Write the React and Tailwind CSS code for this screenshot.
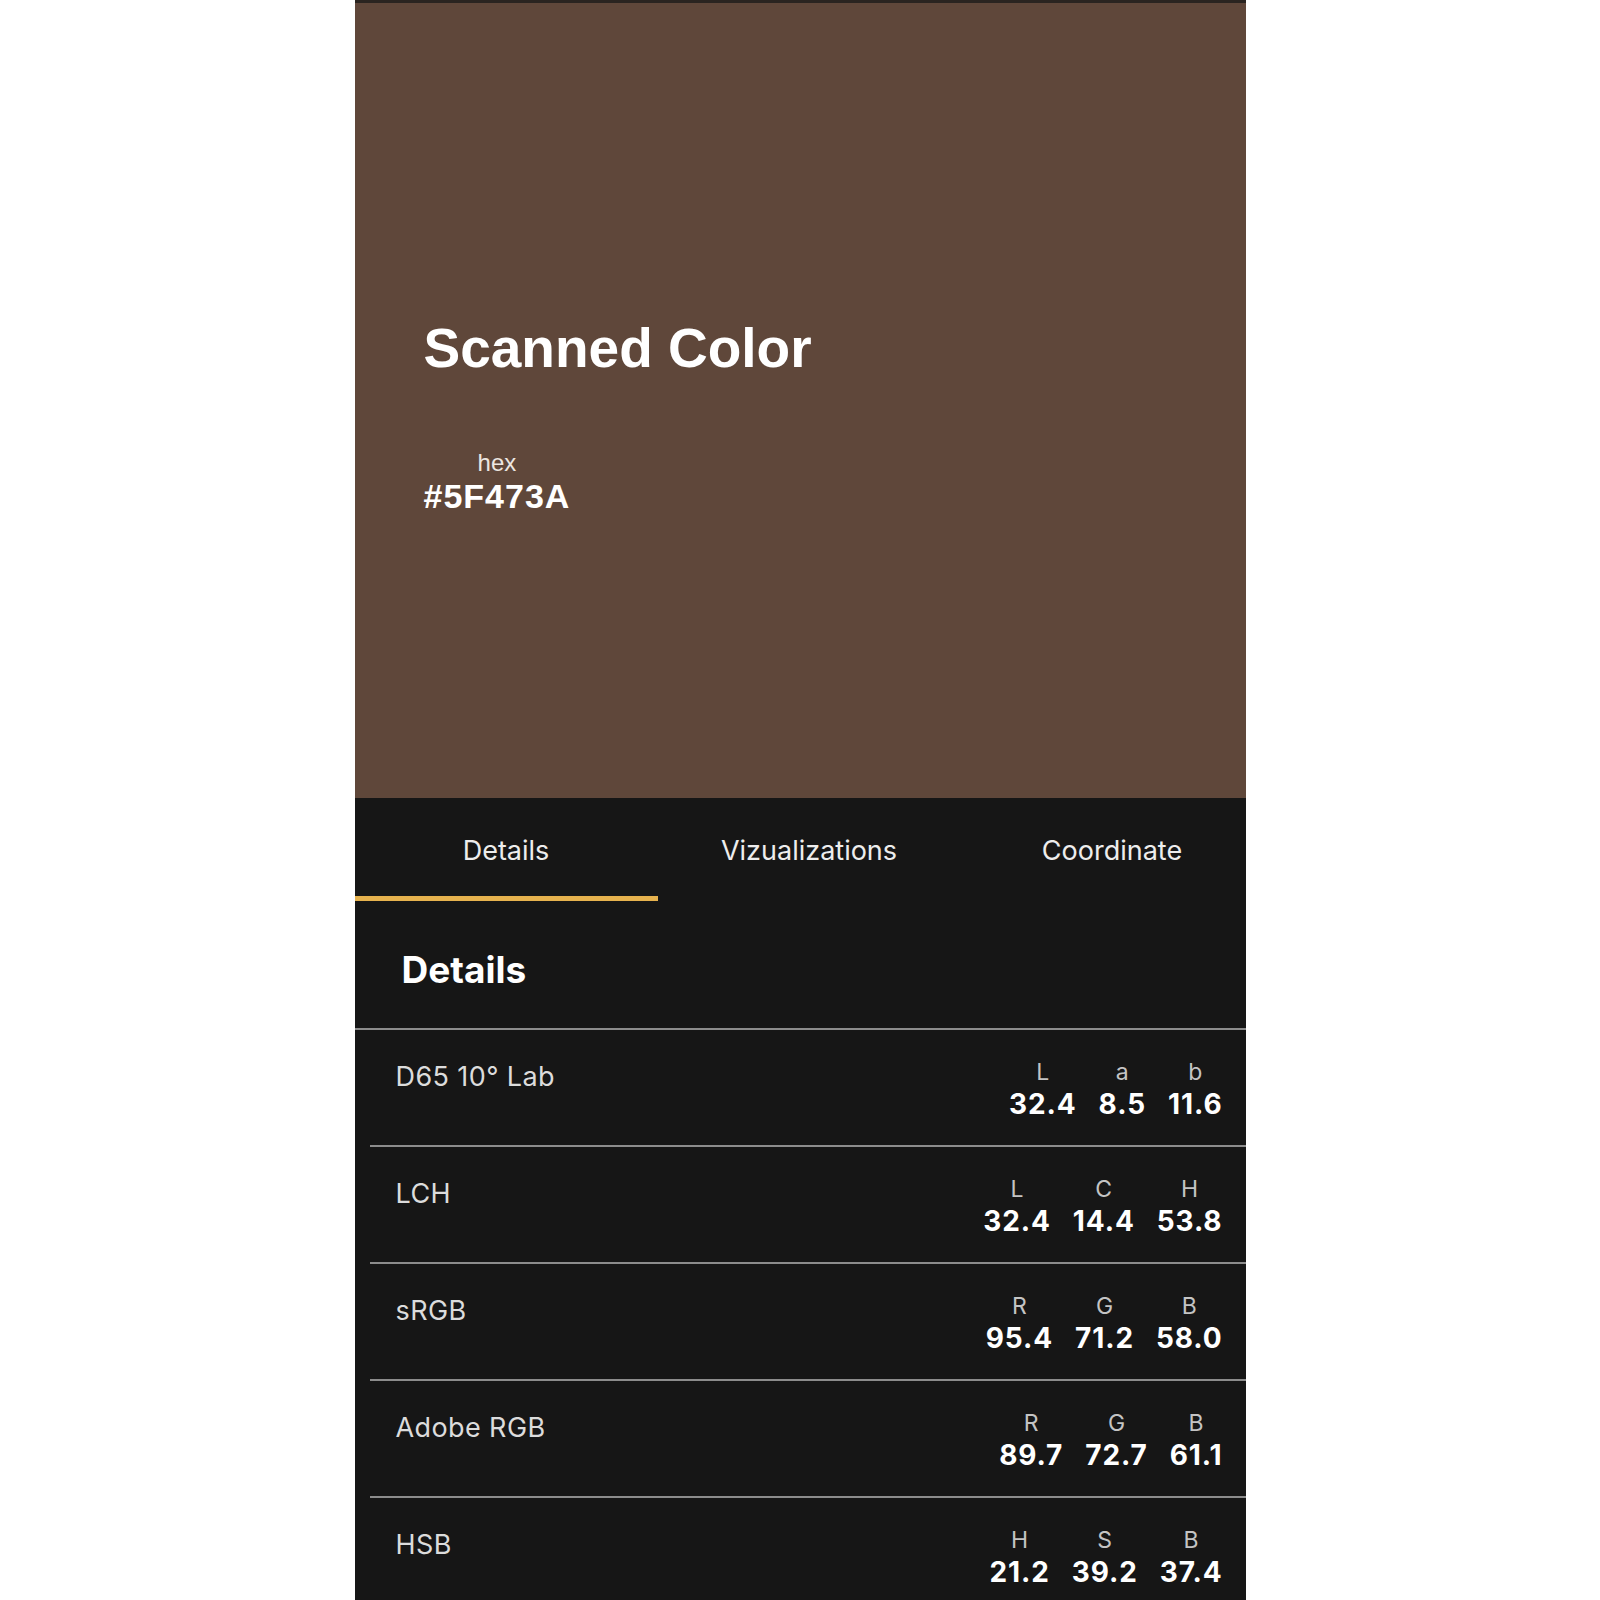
import React, { useState } from "react";

const rows = [
  {
    name: "D65 10° Lab",
    values: [
      ["L", "32.4"],
      ["a", "8.5"],
      ["b", "11.6"],
    ],
  },
  {
    name: "LCH",
    values: [
      ["L", "32.4"],
      ["C", "14.4"],
      ["H", "53.8"],
    ],
  },
  {
    name: "sRGB",
    values: [
      ["R", "95.4"],
      ["G", "71.2"],
      ["B", "58.0"],
    ],
  },
  {
    name: "Adobe RGB",
    values: [
      ["R", "89.7"],
      ["G", "72.7"],
      ["B", "61.1"],
    ],
  },
  {
    name: "HSB",
    values: [
      ["H", "21.2"],
      ["S", "39.2"],
      ["B", "37.4"],
    ],
  },
];

const tabs = ["Details", "Vizualizations", "Coordinate"];

export default function App() {
  const [activeTab, setActiveTab] = useState(0);

  return (
    <div className="bg-white min-h-screen">
      <div className="w-[891px] mx-auto min-h-screen bg-[#161616] overflow-hidden">
        {/* Color swatch */}
        <div className="h-[3px] bg-[#2a2420]" />
        <section className="h-[795px] bg-[#5f473a] pl-[69px] pt-[318px] font-['Liberation_Sans',Arial,sans-serif] text-white">
          <h1 className="text-[55px] leading-none font-bold">Scanned Color</h1>
          <div className="mt-[75px] inline-flex flex-col items-center">
            <span className="text-[24px] leading-none text-[#ece6e1]">hex</span>
            <span className="mt-[4px] text-[34px] leading-none font-bold tracking-[1px]">
              #5F473A
            </span>
          </div>
        </section>

        {/* Tabs */}
        <div className="flex font-['Inter',sans-serif]">
          {tabs.map((tab, index) => (
            <button
              key={tab}
              onClick={() => setActiveTab(index)}
              className={`w-[303px] shrink-0 h-[103px] pt-[39px] flex justify-center text-[27px] leading-none text-[#ededed] border-b-[5px] ${
                activeTab === index ? "border-[#e6b24e]" : "border-transparent"
              }`}
            >
              {tab}
            </button>
          ))}
        </div>

        {/* Details */}
        <div className="font-['Inter',sans-serif]">
          <h2 className="pl-[47px] pt-[50px] pb-[40px] text-[37px] leading-none font-bold text-white">
            Details
          </h2>
          <div className="h-[2px] bg-[#8c8c8c]" />
          {rows.map((row) => (
            <div key={row.name}>
              <div className="h-[115px] flex justify-between pl-[41px] pr-[23px]">
                <div className="pt-[33px] text-[27px] leading-none tracking-[0.4px] text-[#dcdcdc]">
                  {row.name}
                </div>
                <div className="pt-[31px] flex gap-[22px]">
                  {row.values.map(([label, value]) => (
                    <div key={label} className="flex flex-col items-center">
                      <span className="text-[23px] leading-none text-[#c4c4c4]">
                        {label}
                      </span>
                      <span className="mt-[6px] text-[28px] leading-none font-bold tracking-[0.9px] text-white">
                        {value}
                      </span>
                    </div>
                  ))}
                </div>
              </div>
              <div className="ml-[15px] h-[2px] bg-[#8c8c8c]" />
            </div>
          ))}
        </div>
      </div>
    </div>
  );
}
